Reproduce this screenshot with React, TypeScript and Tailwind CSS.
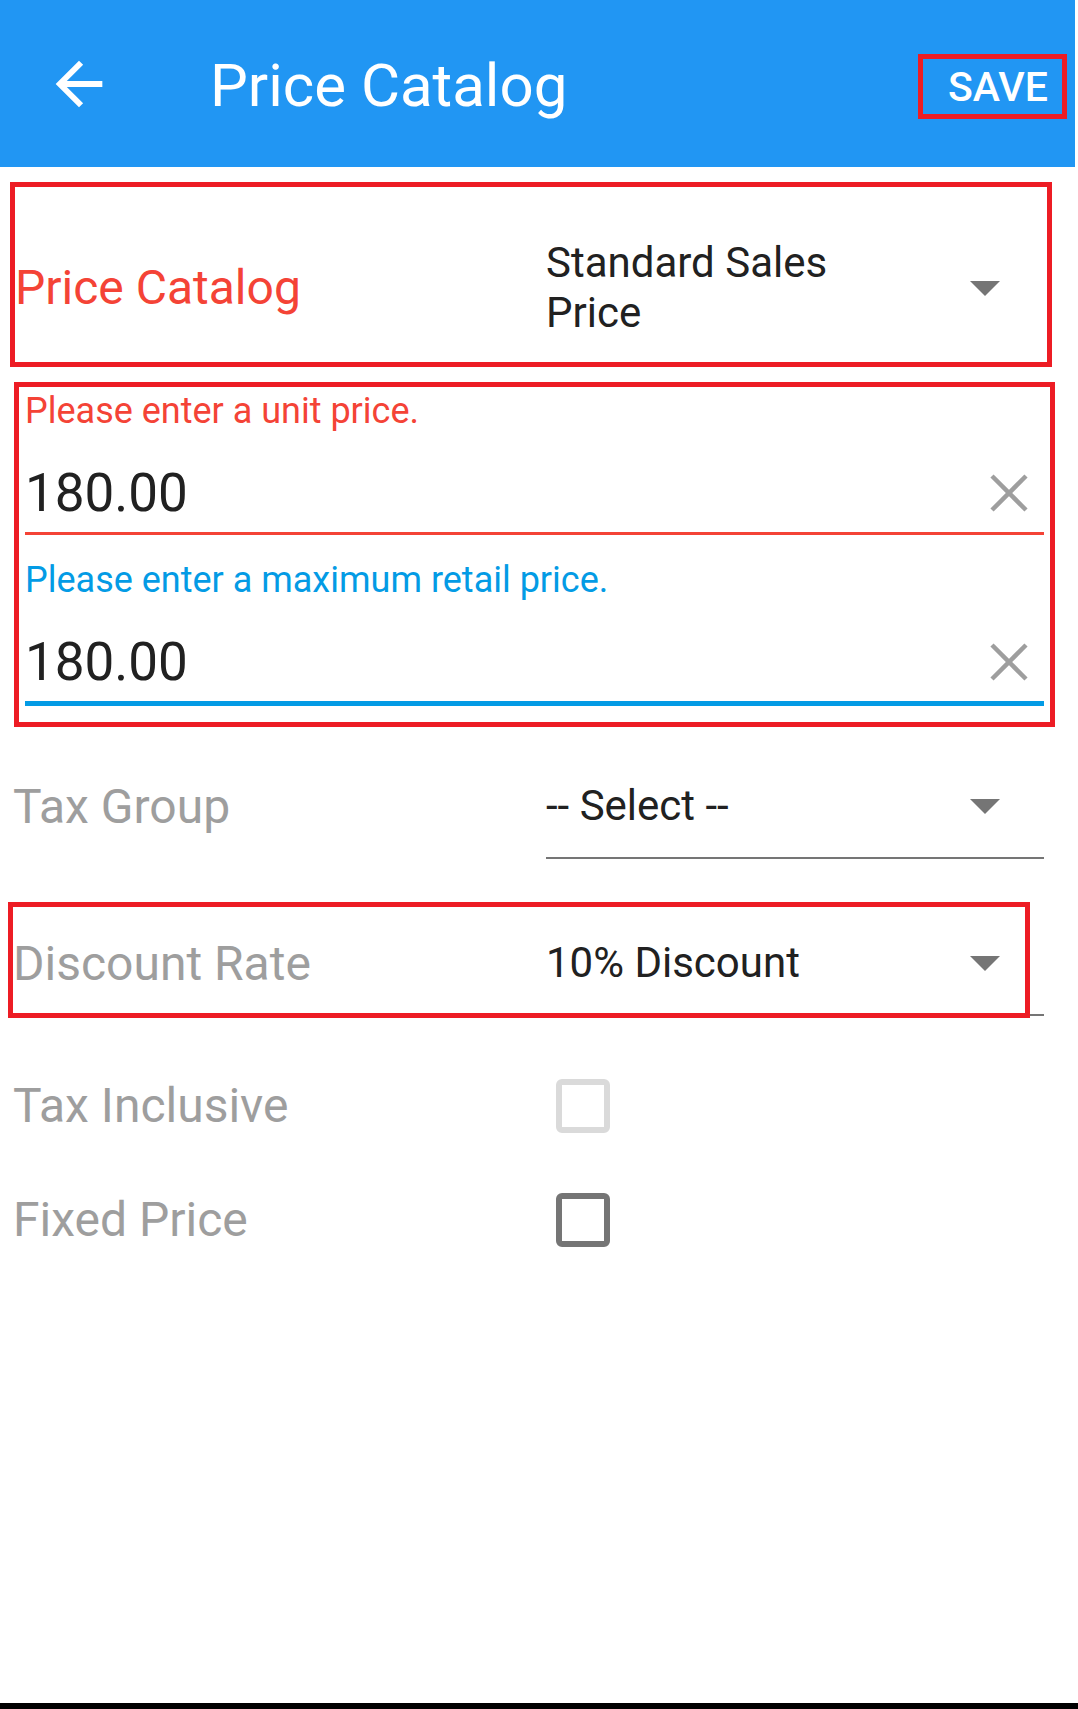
import React from "react";

const Triangle = () => (
  <svg width="30" height="15" viewBox="0 0 30 15" className="shrink-0">
    <polygon points="0,0 30,0 15,15" fill="#757575" />
  </svg>
);

const ClearIcon = () => (
  <svg width="40" height="40" viewBox="0 0 40 40" className="shrink-0">
    <line x1="3" y1="3" x2="37" y2="37" stroke="#9E9E9E" strokeWidth="4.5" />
    <line x1="37" y1="3" x2="3" y2="37" stroke="#9E9E9E" strokeWidth="4.5" />
  </svg>
);

const Field = ({
  label,
  value,
  color,
  lineClass,
  top,
}: {
  label: string;
  value: string;
  color: string;
  lineClass: string;
  top: string;
}) => (
  <div className={top}>
    <div className={`text-[36px] leading-[42px] ${color}`}>{label}</div>
    <div className="mt-[29px] flex h-[64px] items-center justify-between">
      <span className="text-[53px] leading-[64px] text-[#212121]">{value}</span>
      <div className="mr-[15px]">
        <ClearIcon />
      </div>
    </div>
    <div className={lineClass} />
  </div>
);

export default function App() {
  return (
    <div className="flex h-[1709px] w-full flex-col overflow-hidden bg-white font-['Roboto',sans-serif]">
      {/* Header */}
      <header className="flex h-[167px] w-[1075px] shrink-0 items-center bg-[#2196F3]">
        <div className="ml-[44px] h-[70px] w-[70px]">
          <svg viewBox="0 0 24 24" width="70" height="70" fill="#ffffff">
            <path d="M20 11H7.83l5.59-5.59L12 4l-8 8 8 8 1.41-1.41L7.83 13H20v-2z" />
          </svg>
        </div>
        <h1 className="ml-[96px] mt-[4px] text-[60px] font-normal leading-[70px] text-white">
          Price Catalog
        </h1>
        <div className="ml-auto mr-[8px] mt-[6px] flex h-[65px] w-[149px] items-center border-[5px] border-[#ED1C24] pl-[25px]">
          <span className="text-[41px] font-medium leading-[48px] text-white">SAVE</span>
        </div>
      </header>

      {/* Price catalog select (annotated) */}
      <div className="ml-[10px] mt-[15px] h-[185px] w-[1042px] border-[5px] border-[#ED1C24] pt-[51px]">
        <div className="grid grid-cols-[531px_498px] items-center">
          <div className="text-[48px] leading-[54px] text-[#F44336]">Price Catalog</div>
          <div className="flex items-center">
            <div className="w-[340px] text-[42px] leading-[50px] text-[#212121]">
              Standard Sales Price
            </div>
            <div className="ml-auto mr-[44px]">
              <Triangle />
            </div>
          </div>
        </div>
      </div>

      {/* Price inputs (annotated) */}
      <div className="ml-[14px] mt-[15px] h-[345px] w-[1041px] border-[5px] border-[#ED1C24] px-[6px] pt-[3px]">
        <Field
          top=""
          label="Please enter a unit price."
          value="180.00"
          color="text-[#F44336]"
          lineClass="mt-[7px] h-[3px] bg-[#F44336]"
        />
        <Field
          top="mt-[24px]"
          label="Please enter a maximum retail price."
          value="180.00"
          color="text-[#039BE5]"
          lineClass="mt-[7px] h-[5px] bg-[#039BE5]"
        />
      </div>

      {/* Tax group */}
      <div className="mt-[53px] grid grid-cols-[533px_498px] items-start pl-[13px]">
        <div className="text-[48px] leading-[54px] text-[#9E9E9E]">Tax Group</div>
        <div className="flex items-center border-b-2 border-[#757575] pb-[26px] pt-px">
          <span className="text-[42px] leading-[50px] text-[#212121]">-- Select --</span>
          <div className="ml-auto mr-[44px]">
            <Triangle />
          </div>
        </div>
      </div>

      {/* Discount rate (annotated) */}
      <div className="relative mt-[78px] grid grid-cols-[533px_498px] items-start pl-[13px]">
        <div className="text-[48px] leading-[54px] text-[#9E9E9E]">Discount Rate</div>
        <div className="flex items-center border-b-2 border-[#757575] pb-[26px] pt-px">
          <span className="text-[42px] leading-[50px] text-[#212121]">10% Discount</span>
          <div className="ml-auto mr-[44px]">
            <Triangle />
          </div>
        </div>
        <div className="pointer-events-none absolute left-[8px] top-[-35px] h-[116px] w-[1022px] border-[5px] border-[#ED1C24]" />
      </div>

      {/* Tax inclusive */}
      <div className="mt-[63px] grid h-[54px] grid-cols-[533px_498px] items-center pl-[13px]">
        <div className="text-[48px] leading-[54px] text-[#9E9E9E]">Tax Inclusive</div>
        <div className="ml-[10px] h-[54px] w-[54px] rounded-[6px] border-[6px] border-[#DADADA]" />
      </div>

      {/* Fixed price */}
      <div className="mt-[60px] grid h-[54px] grid-cols-[533px_498px] items-center pl-[13px]">
        <div className="text-[48px] leading-[54px] text-[#9E9E9E]">Fixed Price</div>
        <div className="ml-[10px] h-[54px] w-[54px] rounded-[6px] border-[6px] border-[#757575]" />
      </div>

      <div className="flex-1" />
      <div className="h-[6px] w-full shrink-0 bg-black" />
    </div>
  );
}
